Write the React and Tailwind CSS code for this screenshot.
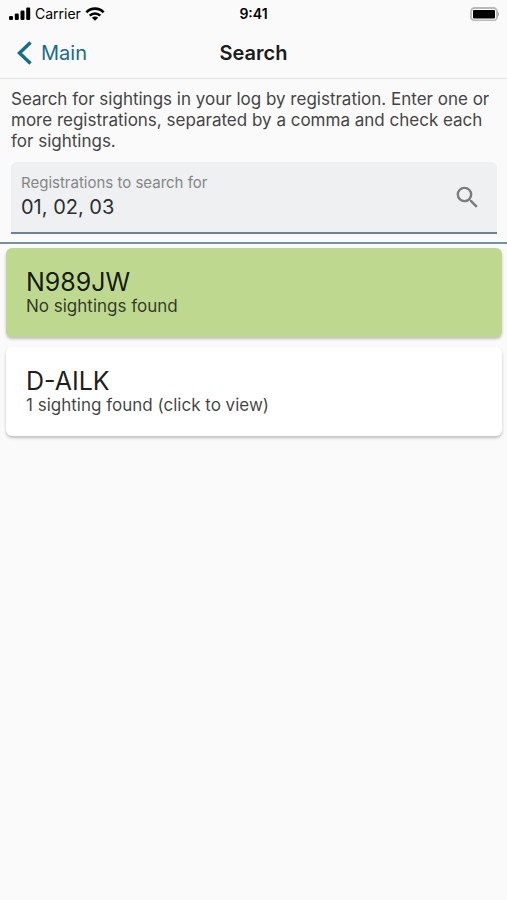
import React, { useState } from "react";

const RESULTS = [
  {
    registration: "N989JW",
    message: "No sightings found",
    color: "bg-[#bfd890]",
  },
  {
    registration: "D-AILK",
    message: "1 sighting found (click to view)",
    color: "bg-white",
  },
];

function StatusBar() {
  return (
    <div className="grid grid-cols-3 items-center h-[27px] pl-2 pr-2 text-sm text-black">
      <div className="flex items-center gap-1">
        <svg width="23" height="14" viewBox="0 0 23 14" aria-hidden="true">
          <rect x="1" y="9" width="4" height="4" rx="1.2" />
          <rect x="6.8" y="6.5" width="4" height="6.5" rx="1.2" />
          <rect x="12.5" y="3.5" width="4" height="9.5" rx="1.2" />
          <rect x="18.2" y="0.5" width="4" height="12.5" rx="1.2" />
        </svg>
        <span>Carrier</span>
        <svg width="20" height="14" viewBox="0 0 20 14" aria-hidden="true">
          <g fill="none" stroke="black" strokeWidth="2.6">
            <path d="M1.4 5.3a12 12 0 0 1 17.2 0" />
            <path d="M4.7 8.7a7.5 7.5 0 0 1 10.6 0" />
          </g>
          <path d="M10 13.8 6.9 10.7a4.4 4.4 0 0 1 6.2 0Z" />
        </svg>
      </div>
      <span className="text-center font-semibold">9:41</span>
      <svg
        className="justify-self-end"
        width="30"
        height="14"
        viewBox="0 0 30 14"
        aria-hidden="true"
      >
        <rect x="2" y="1" width="26" height="12.4" rx="3.5" fill="white" stroke="#b9b9b9" strokeWidth="1.8" />
        <rect x="4" y="3" width="22" height="8.4" rx="1" />
        <path d="M28.4 4.6c2.2 1.2 2.2 4 0 5.2Z" fill="#a8a8a8" />
      </svg>
    </div>
  );
}

function Header() {
  return (
    <header className="border-b border-[#e3e3e3]">
      <StatusBar />
      <nav className="grid grid-cols-3 items-center h-[51px] px-4">
        <a href="#main" className="flex items-center gap-2 text-xl text-[#176c8c]">
          <svg width="17" height="24" viewBox="0 0 17 24" aria-hidden="true">
            <path
              d="M14.5 1.5 3.5 12l11 10.5"
              fill="none"
              stroke="currentColor"
              strokeWidth="3.4"
            />
          </svg>
          Main
        </a>
        <h1 className="text-center text-xl font-semibold text-[#1c1c1e]">Search</h1>
      </nav>
    </header>
  );
}

function ResultCard({ result }) {
  return (
    <button
      type="button"
      className={`block w-full rounded-md px-5 pt-5 pb-5 text-left shadow-[0_2px_3px_rgba(0,0,0,0.24)] ${result.color}`}
    >
      <span className="block text-[25px] leading-7 text-black/90">{result.registration}</span>
      <span className="block text-[17px] leading-[21px] text-black/75">{result.message}</span>
    </button>
  );
}

export default function App() {
  const [query, setQuery] = useState("01, 02, 03");

  return (
    <div className="min-h-screen bg-[#fafafa] font-['Inter',sans-serif]">
      <Header />

      {/* Search form */}
      <form
        className="pl-[11px] pr-[10px] pt-[10px] pb-2 border-b-2 border-[#76909d]"
        onSubmit={(e) => e.preventDefault()}
      >
        <p className="text-[17px] leading-[21px] text-[#454545]">
          Search for sightings in your log by registration. Enter one or more
          registrations, separated by a comma and check each for sightings.
        </p>
        <div className="mt-[10px] flex items-center rounded-t-md border-b-2 border-[#6b8593] bg-[#eef0f2] h-[72px] px-[10px]">
          <div className="flex-1 min-w-0">
            <label htmlFor="registrations" className="block text-[15px] leading-5 text-[#858687]">
              Registrations to search for
            </label>
            <input
              id="registrations"
              type="text"
              value={query}
              onChange={(e) => setQuery(e.target.value)}
              className="block w-full bg-transparent text-xl leading-7 text-[#2d2e2f] outline-none"
            />
          </div>
          <button type="submit" aria-label="Search" className="px-[5px] text-[#7c7c7c]">
            <svg width="29" height="29" viewBox="0 0 24 24" fill="currentColor" aria-hidden="true">
              <path d="M15.5 14h-.79l-.28-.27A6.47 6.47 0 0 0 16 9.5 6.5 6.5 0 1 0 9.5 16c1.61 0 3.09-.59 4.23-1.57l.27.28v.79l5 4.99L20.49 19l-4.99-5zm-6 0C7.01 14 5 11.99 5 9.5S7.01 5 9.5 5 14 7.01 14 9.5 11.99 14 9.5 14z" />
            </svg>
          </button>
        </div>
      </form>

      {/* Results */}
      <main className="flex flex-col gap-[10px] pl-[6px] pr-[5px] pt-1">
        {RESULTS.map((result) => (
          <ResultCard key={result.registration} result={result} />
        ))}
      </main>
    </div>
  );
}
